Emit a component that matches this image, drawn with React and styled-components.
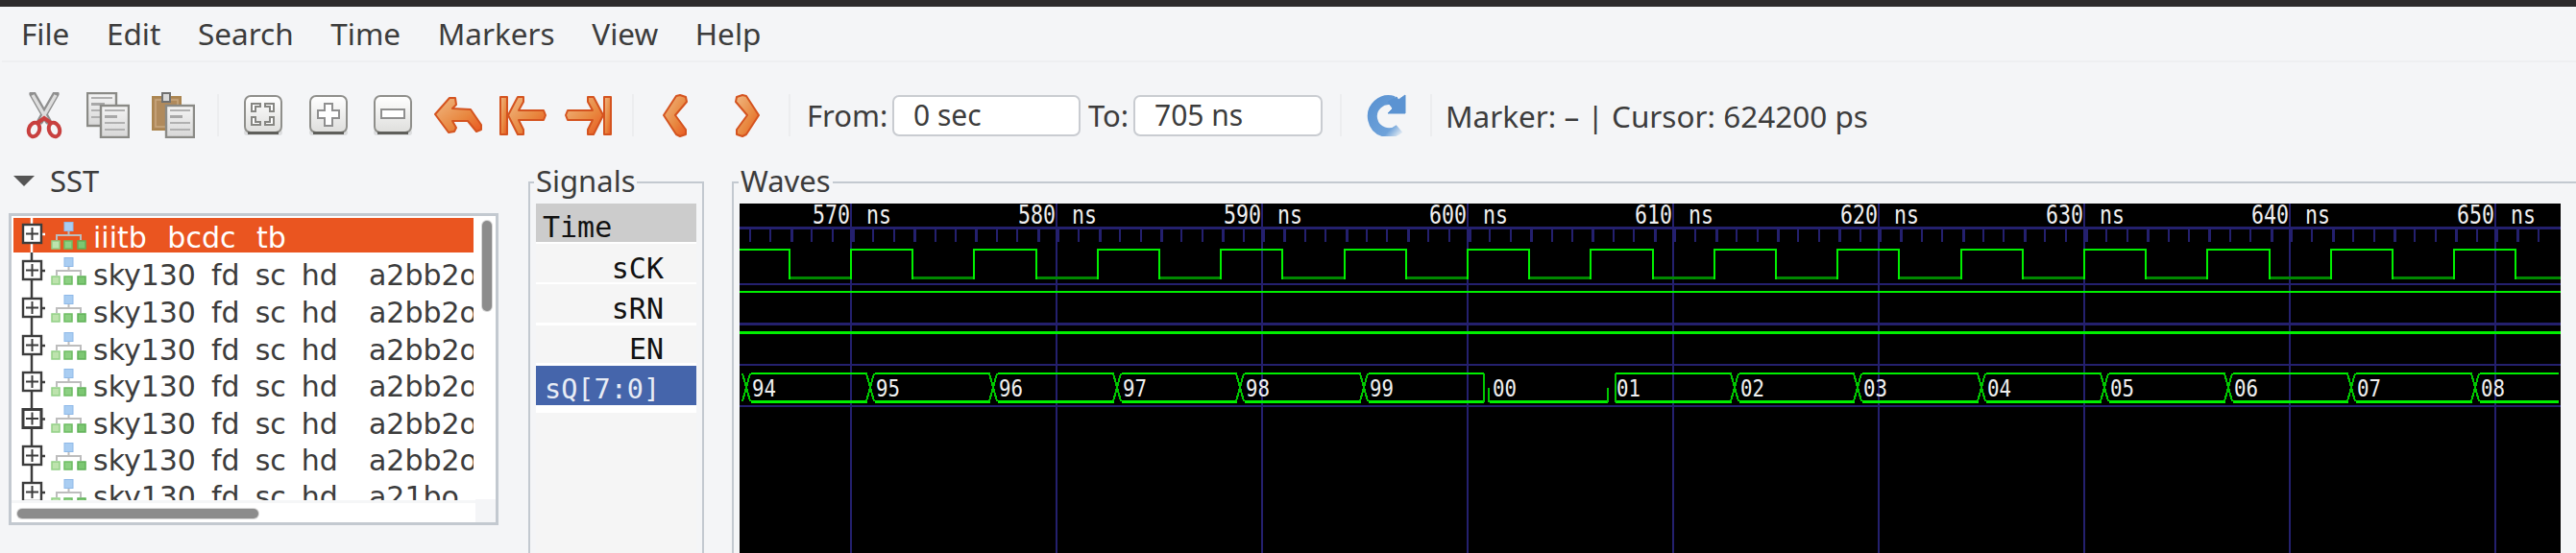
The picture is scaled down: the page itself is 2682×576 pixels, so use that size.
import React from "react";
import styled, { createGlobalStyle } from "styled-components";

const Global = createGlobalStyle`
  html, body { margin: 0; padding: 0; background: #f4f5f7; overflow: hidden; }
  body { width: 2682px; height: 576px; font-family: "Noto Sans", "Liberation Sans", sans-serif; color: #3c3c3c; }
`;

const Window = styled.div`
  width: 2682px;
  height: 576px;
  display: flex;
  flex-direction: column;
  background: #f4f5f7;
  overflow: hidden;
`;
const TitleEdge = styled.div`height: 7px; background: #2d2b2c; flex: none;`;
const MenuBar = styled.div`
  height: 56px;
  flex: none;
  display: flex;
  align-items: center;
  gap: 38.6px;
  padding: 0 0 0 20px;
  margin-left: 2px;
  border-bottom: 2px solid #eeeff1;
  font-size: 31.5px;
`;
const MenuItem = styled.span`line-height: 40px;`;
const Toolbar = styled.div`
  height: 110px;
  flex: none;
  display: flex;
  align-items: center;
  padding-left: 27px;
`;
const Tool = styled.span`
  width: ${p => p.$w}px;
  margin-right: ${p => p.$mr || 0}px;
  flex: none;
  display: flex;
  align-items: center;
  justify-content: center;
  line-height: 0;
`;
const Sep = styled.span`
  width: 2px;
  height: 44px;
  background: #ecedef;
  flex: none;
  margin: ${p => p.$m};
`;
const FieldLabel = styled.span`
  font-size: 31px;
  width: ${p => p.$w}px;
  flex: none;
  white-space: nowrap;
`;
const Field = styled.div`
  height: 43px;
  width: ${p => p.$w}px;
  box-sizing: border-box;
  border: 2px solid #c9ccd1;
  border-radius: 7px;
  background: #fff;
  padding-left: 20px;
  font-size: 30px;
  line-height: 38px;
  margin-right: ${p => p.$mr || 0}px;
  flex: none;
`;
const Status = styled.span`font-size: 31.5px; white-space: nowrap;`;

const Main = styled.div`flex: 1; display: flex; min-height: 0; overflow: hidden;`;
const SstPane = styled.div`
  width: 550px;
  padding-left: 9px;
  box-sizing: border-box;
  flex: none;
`;
const SstHead = styled.div`
  height: 26px;
  line-height: 26px;
  display: flex;
  align-items: center;
  gap: 16px;
  padding-left: 5px;
  font-size: 31px;
`;
const TreeFrame = styled.div`
  width: 510px;
  height: 325px;
  box-sizing: border-box;
  margin-top: 21px;
  border: 3px solid #c3c9d0;
  background: #fff;
  position: relative;
  overflow: hidden;
`;
const TreeList = styled.div`
  padding: 2px 0 0 2px;
  height: 296px;
  width: 481px;
  box-sizing: border-box;
  overflow: hidden;
`;
const TreeRow = styled.div`
  display: flex;
  height: ${p => p.$h}px;
  width: 479px;
  align-items: center;
  background: ${p => (p.$selected ? "#ea5520" : "transparent")};
  color: ${p => (p.$selected ? "#fff" : "#3c3c3c")};
  font-family: "DejaVu Sans", sans-serif;
  font-size: 30px;
  white-space: pre;
  word-spacing: ${p => (p.$selected ? 12 : 6.5)}px;
  clip-path: inset(0 0 -7px 0);
  flex: none;
`;
const TreeText = styled.span`
  margin-left: 7px;
  line-height: 30px;
  transform: translateY(${p => (p.$selected ? 3 : 4.5)}px);
`;
const ScrollV = styled.div`
  position: absolute;
  right: 4px;
  top: 5px;
  width: 10px;
  height: 94px;
  border-radius: 5px;
  background: #8c8c8c;
  box-shadow: 0 0 0 1px rgba(140, 140, 140, 0.35);
`;
const ScrollH = styled.div`
  position: absolute;
  left: 6px;
  top: 305px;
  height: 10px;
  width: 251px;
  border-radius: 5px;
  background: #8c8c8c;
  box-shadow: 0 0 0 1px rgba(140, 140, 140, 0.35);
`;
const HBarEdge = styled.div`
  position: absolute;
  left: 0;
  right: 0;
  top: 296px;
  height: 3px;
  background: #f5f6f7;
`;
const HBarCorner = styled.div`
  position: absolute;
  left: 483px;
  right: 0;
  bottom: 0;
  height: 24px;
  background: #f4f5f7;
`;

const Frame = styled.div`
  position: relative;
  flex: none;
  width: ${p => p.$w}px;
  height: 400px;
  margin-left: ${p => p.$ml}px;
  margin-top: 14px;
  box-sizing: border-box;
  border: 2px solid #c3c9d0;
  border-bottom: none;
  ${p => p.$open && "border-right: none;"}
  padding: 21px 0 0 ${p => p.$pl}px;
`;
const FrameTitle = styled.span`
  position: absolute;
  top: -21px;
  left: ${p => p.$l}px;
  padding: 0 2px;
  background: #f4f5f7;
  font-size: 31px;
  line-height: 36px;
`;
const SignalList = styled.div`
  width: 167px;
  height: 100%;
  display: flex;
  flex-direction: column;
  font-family: "DejaVu Sans Mono", monospace;
  background: #fff;
`;
const SignalRow = styled.div`
  height: ${p => p.$h}px;
  flex: none;
  box-sizing: border-box;
  display: flex;
  align-items: center;
  justify-content: ${p => (p.$right ? "flex-end" : "flex-start")};
  padding: ${p => (p.$right ? "10px 34px 0 0" : `8px 0 0 ${p.$pl || 7}px`)};
  background: ${p => p.$bg || "#f5f5f5"};
  color: ${p => p.$fg || "#111"};
  margin-bottom: ${p => p.$mb || 0}px;
  font-size: ${p => p.$fs || 30}px;
  line-height: 29px;
`;
const SignalFill = styled.div`flex: 1; background: #f5f5f5; margin-top: 8px;`;
const WaveCanvas = styled.svg`
  display: block;
  width: 1896px;
  height: 364px;
  background: #000;
`;
const WaveLabel = styled.text`
  font-family: "DejaVu Sans Mono", monospace;
  font-size: ${p => p.$s}px;
  fill: #f0f0f0;
`;

const Page = ({ x, y, w = 31, h = 36 }) => (
  <g>
    <rect x={x + 1} y={y + 1} width={w - 2} height={h - 2} fill="url(#pg)" stroke="#8a8a86" strokeWidth="2.4" />
    <path d={`M${x + 5} ${y + 6}h${w - 10}M${x + 5} ${y + 19}h${w - 10}M${x + 5} ${y + 26}h${w - 10}`} stroke="#b0b0b0" strokeWidth="2" />
    <path d={`M${x + 5} ${y + 12.5}h${w - 18}`} stroke="#a8a8a8" strokeWidth="3" />
  </g>
);
const IconDefs = () => (
  <defs>
    <linearGradient id="pg" x1="0" y1="0" x2="0" y2="1">
      <stop offset="0" stopColor="#f4f4f4" />
      <stop offset="1" stopColor="#d8d8d8" />
    </linearGradient>
    <linearGradient id="org" x1="0" y1="0" x2="1" y2="1">
      <stop offset="0" stopColor="#f0b984" />
      <stop offset="0.6" stopColor="#e8873f" />
      <stop offset="1" stopColor="#ea5520" />
    </linearGradient>
    <linearGradient id="btn" x1="0" y1="0" x2="0" y2="1">
      <stop offset="0" stopColor="#ffffff" />
      <stop offset="1" stopColor="#dededc" />
    </linearGradient>
    <linearGradient id="bl" gradientUnits="userSpaceOnUse" x1="6" y1="8" x2="40" y2="38">
      <stop offset="0" stopColor="#5b93d2" />
      <stop offset="0.75" stopColor="#6ea2da" />
      <stop offset="1" stopColor="#dbe6f1" />
    </linearGradient>
  </defs>
);
function Scissors() {
  return (
    <svg width="38" height="49" viewBox="0 0 38 49">
      <path d="M7 2 L23 30 M31 2 L15 30" stroke="#8f8f8f" strokeWidth="7" fill="none" strokeLinecap="round" />
      <path d="M7 3 L22 29 M31 3 L16 29" stroke="#dedede" strokeWidth="3.5" fill="none" />
      <ellipse cx="8.5" cy="39" rx="5.5" ry="7.5" fill="none" stroke="#c8403f" strokeWidth="4" transform="rotate(18 8.5 39)" />
      <ellipse cx="29.5" cy="39" rx="5.5" ry="7.5" fill="none" stroke="#c8403f" strokeWidth="4" transform="rotate(-18 29.5 39)" />
      <path d="M12 32 L19 27 L26 32" stroke="#c8403f" strokeWidth="4" fill="none" />
    </svg>
  );
}
function Copy() {
  return (
    <svg width="45" height="48" viewBox="0 0 45 48">
      <Page x={0} y={0} w={32} h={36} />
      <Page x={14} y={13} w={31} h={35} />
    </svg>
  );
}
function Paste() {
  return (
    <svg width="45" height="48" viewBox="0 0 45 48">
      <rect x="1" y="5" width="29" height="34" fill="#b08a5c" stroke="#ab8550" strokeWidth="2" />
      <rect x="4" y="8" width="23" height="28" fill="none" stroke="#c9a87f" strokeWidth="1.5" />
      <rect x="11" y="1" width="8" height="9" fill="#d8d8d8" stroke="#707070" strokeWidth="2" />
      <Page x={14} y={13} w={31} h={35} />
    </svg>
  );
}
function ZoomBtn({ kind }) {
  return (
    <svg width="40" height="42" viewBox="0 0 40 42">
      <rect x="0" y="36" width="40" height="6" rx="3" fill="#dcdddf" />
      <rect x="1" y="1" width="38" height="38" rx="6" fill="url(#btn)" stroke="#8f8f8b" strokeWidth="2" />
      <path d="M4 39.5h32" stroke="#5f5f5b" strokeWidth="3" />
      {kind === "fit" && (
        <path d="M8 17V9h9v3h-5v5zM31 17V9h-9v3h5v5zM8 23v8h9v-3h-5v-5zM31 23v8h-9v-3h5v-5z" stroke="#868682" strokeWidth="2" fill="#fff" />
      )}
      {kind === "plus" && (
        <path d="M16 9h8v7h7v8h-7v8h-8v-8H9v-8h7z" fill="#fff" stroke="#8f8f8f" strokeWidth="2" />
      )}
      {kind === "minus" && <rect x="8" y="15" width="24" height="9" fill="#fff" stroke="#8f8f8f" strokeWidth="2" />}
    </svg>
  );
}
const OrangeIcon = ({ w, h, children }) => (
  <svg width={w} height={h} viewBox={`0 0 ${w} ${h}`}>
    <g fill="url(#org)" stroke="#d4531f" strokeWidth="2" strokeLinejoin="round">{children}</g>
  </svg>
);
const BackIcon = () => (
  <OrangeIcon w={50} h={38}>
    <path d="M1 18 L16 1 L22 1 L23 8 L19 12 L38 13 L49 29 L49 34 L44 36 L35 25 L19 25 L23 32 L21 36 L15 37 Z" />
  </OrangeIcon>
);
const FirstIcon = () => (
  <OrangeIcon w={49} h={41}>
    <path d="M1 1h7v39H1z" />
    <path d="M9 20 L19 1 L25 1 L25 6 L20 15 L46 15 L48 20 L46 25 L20 25 L25 35 L25 40 L19 40 Z" />
  </OrangeIcon>
);
const LastIcon = () => (
  <OrangeIcon w={50} h={41}>
    <path d="M42 1h7v39h-7z" />
    <path d="M41 20 L31 1 L25 1 L25 6 L30 15 L4 15 L2 20 L4 25 L30 25 L25 35 L25 40 L31 40 Z" />
  </OrangeIcon>
);
const PrevIcon = () => (
  <OrangeIcon w={26} h={45}>
    <path d="M18 1 L24 3 L25 8 L13 22 L24 37 L24 42 L18 44 L14 42 L1 22 L14 2 Z" />
  </OrangeIcon>
);
const NextIcon = () => (
  <OrangeIcon w={26} h={45}>
    <path d="M8 1 L2 3 L1 8 L13 22 L2 37 L2 42 L8 44 L12 42 L25 22 L12 2 Z" />
  </OrangeIcon>
);
const Refresh = () => (
  <svg width="44" height="44" viewBox="0 0 44 44">
    <path d="M36 36 A17 17 0 1 1 30 7" stroke="url(#bl)" strokeWidth="10" fill="none" />
    <path d="M42 1 V20 H24 L29 15 L24 8 L33 3 L35 6 Z" fill="#5b93d2" stroke="#5b93d2" strokeWidth="1" strokeLinejoin="round" />
  </svg>
);

const Expander = ({ h, selected, heavy }) => {
  const c = h / 2 - (selected ? 1 : 0);
  return (
    <svg width="39" height={h} viewBox={`0 0 39 ${h}`} style={{ flex: "none" }}>
      <path d={`M19 0V${h}`} stroke={selected ? "#fff" : "#3c3c3c"} strokeWidth="2.5" />
      <path d={`M29 ${c}h4`} stroke={selected ? "#fff" : "#3c3c3c"} strokeWidth="2.5" />
      <rect x="10" y={c - 10} width="19" height="19" fill="#fff" stroke="#3c3c3c" strokeWidth={heavy ? 3 : 2.4} />
      <path d={`M13 ${c - 0.5}h13M19.5 ${c - 7}v13`} stroke="#3c3c3c" strokeWidth="2" />
    </svg>
  );
};
const Hierarchy = () => (
  <svg width="37" height="29" viewBox="0 0 37 29" style={{ flex: "none" }}>
    <rect x="14" y="0.5" width="9" height="9" fill="#a9cdf2" stroke="#8fb9e8" />
    <path d="M18.5 10v4M6 19v-5h25v5" stroke="#bdbdbd" strokeWidth="2" fill="none" />
    <rect x="1" y="20" width="8" height="8" fill="#bde3ad" stroke="#92d086" strokeWidth="1.5" />
    <rect x="14" y="20" width="8" height="8" fill="#8dd083" stroke="#6ebd63" strokeWidth="1.5" />
    <rect x="28" y="20" width="8" height="8" fill="#7cc772" stroke="#5fb157" strokeWidth="1.5" />
  </svg>
);

const rows = [
  { t: "iiitb bcdc tb", sel: true, h: 36 },
  { t: "sky130 fd sc hd  a2bb2o", h: 38 },
  { t: "sky130 fd sc hd  a2bb2o", h: 40 },
  { t: "sky130 fd sc hd  a2bb2o", h: 38 },
  { t: "sky130 fd sc hd  a2bb2o", h: 38 },
  { t: "sky130 fd sc hd  a2bb2o", h: 39 },
  { t: "sky130 fd sc hd  a2bb2o", h: 38 },
  { t: "sky130 fd sc hd  a21bo", h: 38 },
];

const BLUE = "#24206e";
const GREEN = "#00f000";
const W = 1896;
const BUS = ["94", "95", "96", "97", "98", "99", "00", "01", "02", "03", "04", "05", "06", "07", "08"];

function Waves() {
  const grid = [570, 580, 590, 600, 610, 620, 630, 640, 650];
  const edges = [];
  for (let k = -2; k < 29; k += 1) edges.push(Math.round(116 + 64.2 * k));
  let hi = "";
  let lo = "";
  let vert = "";
  edges.forEach((x, i) => {
    const next = edges[i + 1];
    if (next === undefined) return;
    if (i % 2 === 0) hi += `M${x} 48H${next}`;
    else lo += `M${x} 77.5H${next}`;
    vert += `M${next} 47V79`;
  });
  const busX = BUS.map((_, k) => Math.round(7 + 128.57 * k));
  return (
    <WaveCanvas viewBox={`0 0 ${W} 364`} shapeRendering="crispEdges">
      <rect x="0" y="24" width={W} height="3" fill={BLUE} />
      {Array.from({ length: 88 }, (_, i) => (
        <rect key={i} x={Math.round(10 + i * 21.4)} y="27" width={i % 3 === 2 ? 3 : 2} height="13" fill={BLUE} />
      ))}
      <rect x="0" y="83" width={W} height="2" fill={BLUE} />
      <rect x="0" y="124" width={W} height="3" fill={BLUE} />
      <rect x="0" y="167" width={W} height="2" fill={BLUE} />
      <rect x="0" y="210" width={W} height="2" fill={BLUE} />
      {grid.map((g, i) => {
        const x = Math.round(115 + i * 214);
        return (
          <g key={g}>
            <rect x={x} y="0" width="2" height="364" fill={BLUE} />
            <WaveLabel $s={26} transform={`translate(${x - 39} 21) scale(0.83 1)`}>{g}</WaveLabel>
            <WaveLabel $s={26} transform={`translate(${x + 17} 21) scale(0.83 1)`}>ns</WaveLabel>
          </g>
        );
      })}
      <path d={lo} stroke="#008800" strokeWidth="3" />
      <path d={hi} stroke={GREEN} strokeWidth="2" />
      <path d={vert} stroke={GREEN} strokeWidth="2" />
      <rect x="0" y="91" width={W} height="2" fill={GREEN} />
      <rect x="0" y="133" width={W} height="3" fill={GREEN} />
      {busX.map((x, i) => {
        const next = busX[i + 1] ?? 1899;
        const end = Math.min(next - 3, W - 2);
        const noTop = i === 6;
        return (
          <g key={x}>
            {!noTop && <path d={`M${x + 5} 177H${end}`} stroke={GREEN} strokeWidth="2" />}
            <path d={`M${x + (i === 6 ? 3 : 5)} 206.5H${end}`} stroke={GREEN} strokeWidth="3" />
            {i === 6 && <path d={`M${x - 3} 177V207M${x + 2} 192V207`} stroke="#00c800" strokeWidth="2" />}
            {i === 7 && <path d={`M${x - 3} 192V207M${x + 5} 177V207`} stroke="#00c800" strokeWidth="2" />}
            {i !== 6 && i !== 7 && (
              <path d={`M${x - 4} 177 L${x + 4} 206 M${x - 4} 206 L${x + 4} 177`} stroke="#00c800" strokeWidth="2" fill="none" />
            )}
            <WaveLabel $s={25} transform={`translate(${x + 6} 201) scale(0.83 1)`}>{BUS[i]}</WaveLabel>
          </g>
        );
      })}
    </WaveCanvas>
  );
}

export default function App() {
  return (
    <Window>
      <Global />
      <svg width="0" height="0" style={{ position: "absolute" }}><IconDefs /></svg>
      <TitleEdge />
      <MenuBar>
        {["File", "Edit", "Search", "Time", "Markers", "View", "Help"].map(m => <MenuItem key={m}>{m}</MenuItem>)}
      </MenuBar>
      <Toolbar>
        <Tool $w={38} $mr={25}><Scissors /></Tool>
        <Tool $w={45} $mr={23}><Copy /></Tool>
        <Tool $w={45}><Paste /></Tool>
        <Sep $m="0 26px 0 23px" />
        <Tool $w={40} $mr={28}><ZoomBtn kind="fit" /></Tool>
        <Tool $w={40} $mr={27}><ZoomBtn kind="plus" /></Tool>
        <Tool $w={40} $mr={23}><ZoomBtn kind="minus" /></Tool>
        <Tool $w={50} $mr={18}><BackIcon /></Tool>
        <Tool $w={49} $mr={18}><FirstIcon /></Tool>
        <Tool $w={50}><LastIcon /></Tool>
        <Sep $m="0 30px 0 21px" />
        <Tool $w={26} $mr={49}><PrevIcon /></Tool>
        <Tool $w={26}><NextIcon /></Tool>
        <Sep $m="0 17px 0 30px" />
        <FieldLabel $w={89}>From:</FieldLabel>
        <Field $w={196} $mr={8}>0 sec</Field>
        <FieldLabel $w={47}>To:</FieldLabel>
        <Field $w={197}>705 ns</Field>
        <Sep $m="0 24px 0 18px" />
        <Tool $w={44}><Refresh /></Tool>
        <Sep $m="0 14px 0 24px" />
        <Status>Marker: – | Cursor: 624200 ps</Status>
      </Toolbar>
      <Main>
        <SstPane>
          <SstHead>
            <svg width="22" height="11" viewBox="0 0 22 11"><path d="M0 0h22L11 11z" fill="#555" /></svg>
            SST
          </SstHead>
          <TreeFrame>
            <TreeList>
              {rows.map((r, i) => (
                <TreeRow key={i} $selected={r.sel} $h={r.h}>
                  <Expander h={r.h} selected={r.sel} heavy={i === 5} />
                  <Hierarchy />
                  <TreeText $selected={r.sel}>{r.t}</TreeText>
                </TreeRow>
              ))}
            </TreeList>
            <HBarEdge />
            <HBarCorner />
            <ScrollV />
            <ScrollH />
          </TreeFrame>
        </SstPane>
        <Frame $w={183} $ml={0} $pl={6}>
          <FrameTitle $l={4}>Signals</FrameTitle>
          <SignalList>
            <SignalRow $bg="#cccccc" $h={40} $mb={2}>Time</SignalRow>
            <SignalRow $right $h={40} $mb={2}>sCK</SignalRow>
            <SignalRow $right $h={40} $mb={3}>sRN</SignalRow>
            <SignalRow $right $h={39} $mb={3}>EN</SignalRow>
            <SignalRow $bg="#4565ab" $fg="#e8ecf5" $h={41} $pl={9} $fs={28.5}>sQ[7:0]</SignalRow>
            <SignalFill />
          </SignalList>
        </Frame>
        <Frame $w={1920} $ml={29} $pl={6} $open>
          <FrameTitle $l={5}>Waves</FrameTitle>
          <Waves />
        </Frame>
      </Main>
    </Window>
  );
}
